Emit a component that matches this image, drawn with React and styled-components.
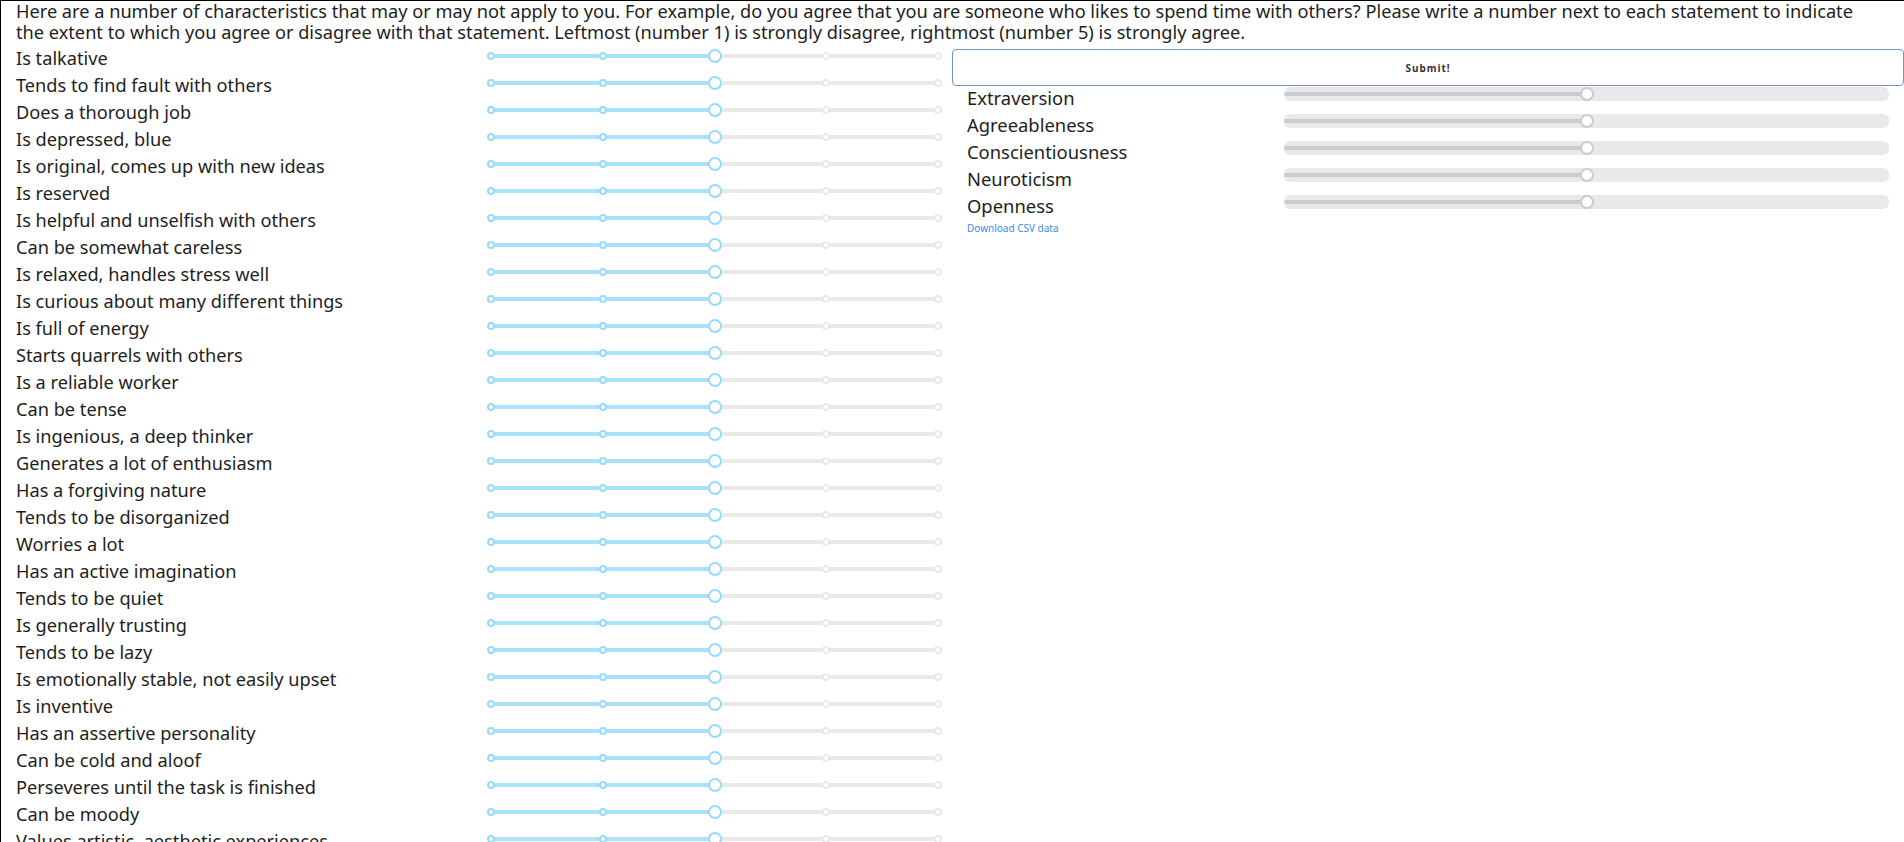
import React from "react";
import styled, { createGlobalStyle } from "styled-components";

const GlobalStyle = createGlobalStyle`
  html, body {
    margin: 0;
    padding: 0;
    background: #fff;
    font-family: "Noto Sans", "Open Sans", sans-serif;
    color: #1e1e1e;
  }
`;

const items = [
  "Is talkative",
  "Tends to find fault with others",
  "Does a thorough job",
  "Is depressed, blue",
  "Is original, comes up with new ideas",
  "Is reserved",
  "Is helpful and unselfish with others",
  "Can be somewhat careless",
  "Is relaxed, handles stress well",
  "Is curious about many different things",
  "Is full of energy",
  "Starts quarrels with others",
  "Is a reliable worker",
  "Can be tense",
  "Is ingenious, a deep thinker",
  "Generates a lot of enthusiasm",
  "Has a forgiving nature",
  "Tends to be disorganized",
  "Worries a lot",
  "Has an active imagination",
  "Tends to be quiet",
  "Is generally trusting",
  "Tends to be lazy",
  "Is emotionally stable, not easily upset",
  "Is inventive",
  "Has an assertive personality",
  "Can be cold and aloof",
  "Perseveres until the task is finished",
  "Can be moody",
  "Values artistic, aesthetic experiences",
  "Is sometimes shy, inhibited",
  "Is considerate and kind to almost everyone",
  "Does things efficiently",
  "Remains calm in tense situations",
  "Prefers work that is routine",
  "Is outgoing, sociable",
  "Is sometimes rude to others",
  "Makes plans and follows through with them",
  "Gets nervous easily",
  "Likes to reflect, play with ideas",
  "Has few artistic interests",
  "Likes to cooperate with others",
  "Is easily distracted",
  "Is sophisticated in art, music, or literature",
];

const traits = ["Extraversion", "Agreeableness", "Conscientiousness", "Neuroticism", "Openness"];

export default function App() {
  return (
    <Page>
      <GlobalStyle />
      <Intro>
        Here are a number of characteristics that may or may not apply to you. For example, do you agree that you are
        someone who likes to spend time with others? Please write a number next to each statement to indicate the
        extent to which you agree or disagree with that statement. Leftmost (number 1) is strongly disagree, rightmost
        (number 5) is strongly agree.
      </Intro>
      <Columns>
        <Questions>
          {items.map((text) => (
            <QuestionRow key={text}>
              <QuestionLabel>{text}</QuestionLabel>
              <StepSlider value={3} />
            </QuestionRow>
          ))}
        </Questions>
        <Results>
          <SubmitButton type="button">Submit!</SubmitButton>
          {traits.map((t) => (
            <TraitRow key={t}>
              <TraitLabel>{t}</TraitLabel>
              <ScoreSlider value={0.5} />
            </TraitRow>
          ))}
          <DownloadLink href="#">Download CSV data</DownloadLink>
        </Results>
      </Columns>
    </Page>
  );
}

const StepSlider = ({ value, min = 1, max = 5 }) => {
  const pct = ((value - min) / (max - min)) * 100;
  const steps = [];
  for (let i = min; i <= max; i++) steps.push(i);
  return (
    <SliderRoot $width={447}>
      <Rail />
      <Track style={{ width: `${pct}%` }} />
      {steps.map((s) => {
        const p = ((s - min) / (max - min)) * 100;
        return <Dot key={s} $active={s <= value} style={{ left: `${p}%` }} />;
      })}
      <Handle style={{ left: `${pct}%` }} />
    </SliderRoot>
  );
};

const ScoreSlider = ({ value }) => (
  <SliderRoot $width={605} $disabled>
    <Rail />
    <Track $disabled style={{ width: `${value * 100}%` }} />
    <Handle $disabled style={{ left: `${value * 100}%` }} />
  </SliderRoot>
);

const Page = styled.div`
  height: 100vh;
  overflow: hidden;
  box-sizing: border-box;
  border-top: 1px solid #000;
  border-left: 1px solid #000;
`;

const Intro = styled.div`
  padding: 0 28px 0 15px;
  font-size: 18.2px;
  line-height: 21px;
`;

const Columns = styled.div`
  display: grid;
  grid-template-columns: 951px 1fr;
`;

const Questions = styled.div`
  padding: 2px 0 0 15px;
`;

const QuestionRow = styled.div`
  display: grid;
  grid-template-columns: 475px 447px;
  height: 27px;
`;

const QuestionLabel = styled.div`
  font-size: 18.2px;
  line-height: 27px;
  white-space: nowrap;
`;

const SliderRoot = styled.div`
  position: relative;
  box-sizing: border-box;
  height: 14px;
  padding: 5px 0;
  width: ${(p) => p.$width}px;
  border-radius: 6px;
  margin-top: ${(p) => (p.$disabled ? 1 : 4)}px;
  background: ${(p) => (p.$disabled ? "#e9e9e9" : "transparent")};
`;

const Rail = styled.div`
  position: absolute;
  left: 0;
  top: 5px;
  width: 100%;
  height: 4px;
  border-radius: 6px;
  background: #e9e9e9;
`;

const Track = styled.div`
  position: absolute;
  left: 0;
  top: 5px;
  height: 4px;
  border-radius: 6px;
  background: ${(p) => (p.$disabled ? "#ccc" : "#abe2fb")};
`;

const Dot = styled.span`
  position: absolute;
  top: 3px;
  width: 8px;
  height: 8px;
  margin-left: -4px;
  box-sizing: border-box;
  border: 2px solid ${(p) => (p.$active ? "#96dbfa" : "#e9e9e9")};
  border-radius: 50%;
  background: #fff;
`;

const Handle = styled.div`
  position: absolute;
  top: 0;
  width: 14px;
  height: 14px;
  margin-left: -7px;
  box-sizing: border-box;
  border: 2px solid ${(p) => (p.$disabled ? "#ccc" : "#96dbfa")};
  border-radius: 50%;
  background: #fff;
`;

const Results = styled.div`
  display: flex;
  flex-direction: column;
  padding-top: 6px;
`;

const SubmitButton = styled.button`
  height: 37px;
  width: 100%;
  margin: 0;
  border: 1px solid #7597c7;
  border-radius: 4px;
  background: #fff;
  font-family: "Noto Sans", sans-serif;
  font-size: 10px;
  font-weight: 700;
  letter-spacing: 1px;
  color: #333;
  cursor: pointer;
`;

const TraitRow = styled.div`
  display: grid;
  grid-template-columns: 317px 605px;
  height: 27px;
  padding-left: 15px;
`;

const TraitLabel = styled.div`
  font-size: 18.4px;
  line-height: 24px;
`;

const DownloadLink = styled.a`
  align-self: flex-start;
  margin-left: 15px;
  font-size: 10px;
  line-height: 14px;
  color: #3a8ee6;
  text-decoration: none;
`;
